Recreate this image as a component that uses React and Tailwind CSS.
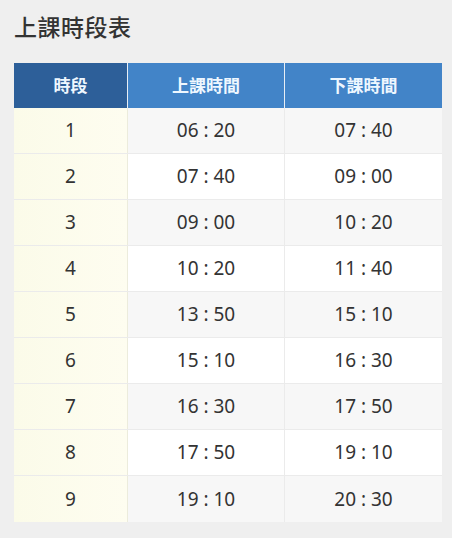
import React from "react";

const rows = [
  ["1", "06 : 20", "07 : 40"],
  ["2", "07 : 40", "09 : 00"],
  ["3", "09 : 00", "10 : 20"],
  ["4", "10 : 20", "11 : 40"],
  ["5", "13 : 50", "15 : 10"],
  ["6", "15 : 10", "16 : 30"],
  ["7", "16 : 30", "17 : 50"],
  ["8", "17 : 50", "19 : 10"],
  ["9", "19 : 10", "20 : 30"],
];

export default function App() {
  return (
    <div
      className="w-[452px] h-[538px] bg-[#efefef] px-[14px] pt-[11px]"
      style={{ fontFamily: '"Noto Sans", "Noto Sans CJK TC", sans-serif' }}
    >
      <h1 className="text-[23px] leading-[32px] font-medium text-[#333] tracking-[0.5px]">上課時段表</h1>
      <div className="mt-[20px] w-[428px]">
        <div className="flex h-[45px] text-[17px] font-bold text-[#eef7ff]">
          <div className="w-[114px] flex items-center justify-center bg-[#2d5f99] border-r border-[#e8eef5]">時段</div>
          <div className="w-[157px] flex items-center justify-center bg-[#4284c8] border-r border-[#e8eef5]">上課時間</div>
          <div className="flex-1 flex items-center justify-center bg-[#4284c8]">下課時間</div>
        </div>
        {rows.map((r, i) => (
          <div
            key={r[0]}
            className={`flex h-[46px] text-[19px] text-[#333] ${i < rows.length - 1 ? "border-b border-[#ebebeb]" : ""} ${i % 2 === 0 ? "bg-[#f7f7f7]" : "bg-white"}`}
          >
            <div className="w-[114px] flex items-center justify-center bg-gradient-to-r from-[#fbfbe9] to-[#fefdf0] border-r border-[#ececdc]">{r[0]}</div>
            <div className="w-[157px] flex items-center justify-center border-r border-[#ebebeb]">{r[1]}</div>
            <div className="flex-1 flex items-center justify-center">{r[2]}</div>
          </div>
        ))}
      </div>
    </div>
  );
}
